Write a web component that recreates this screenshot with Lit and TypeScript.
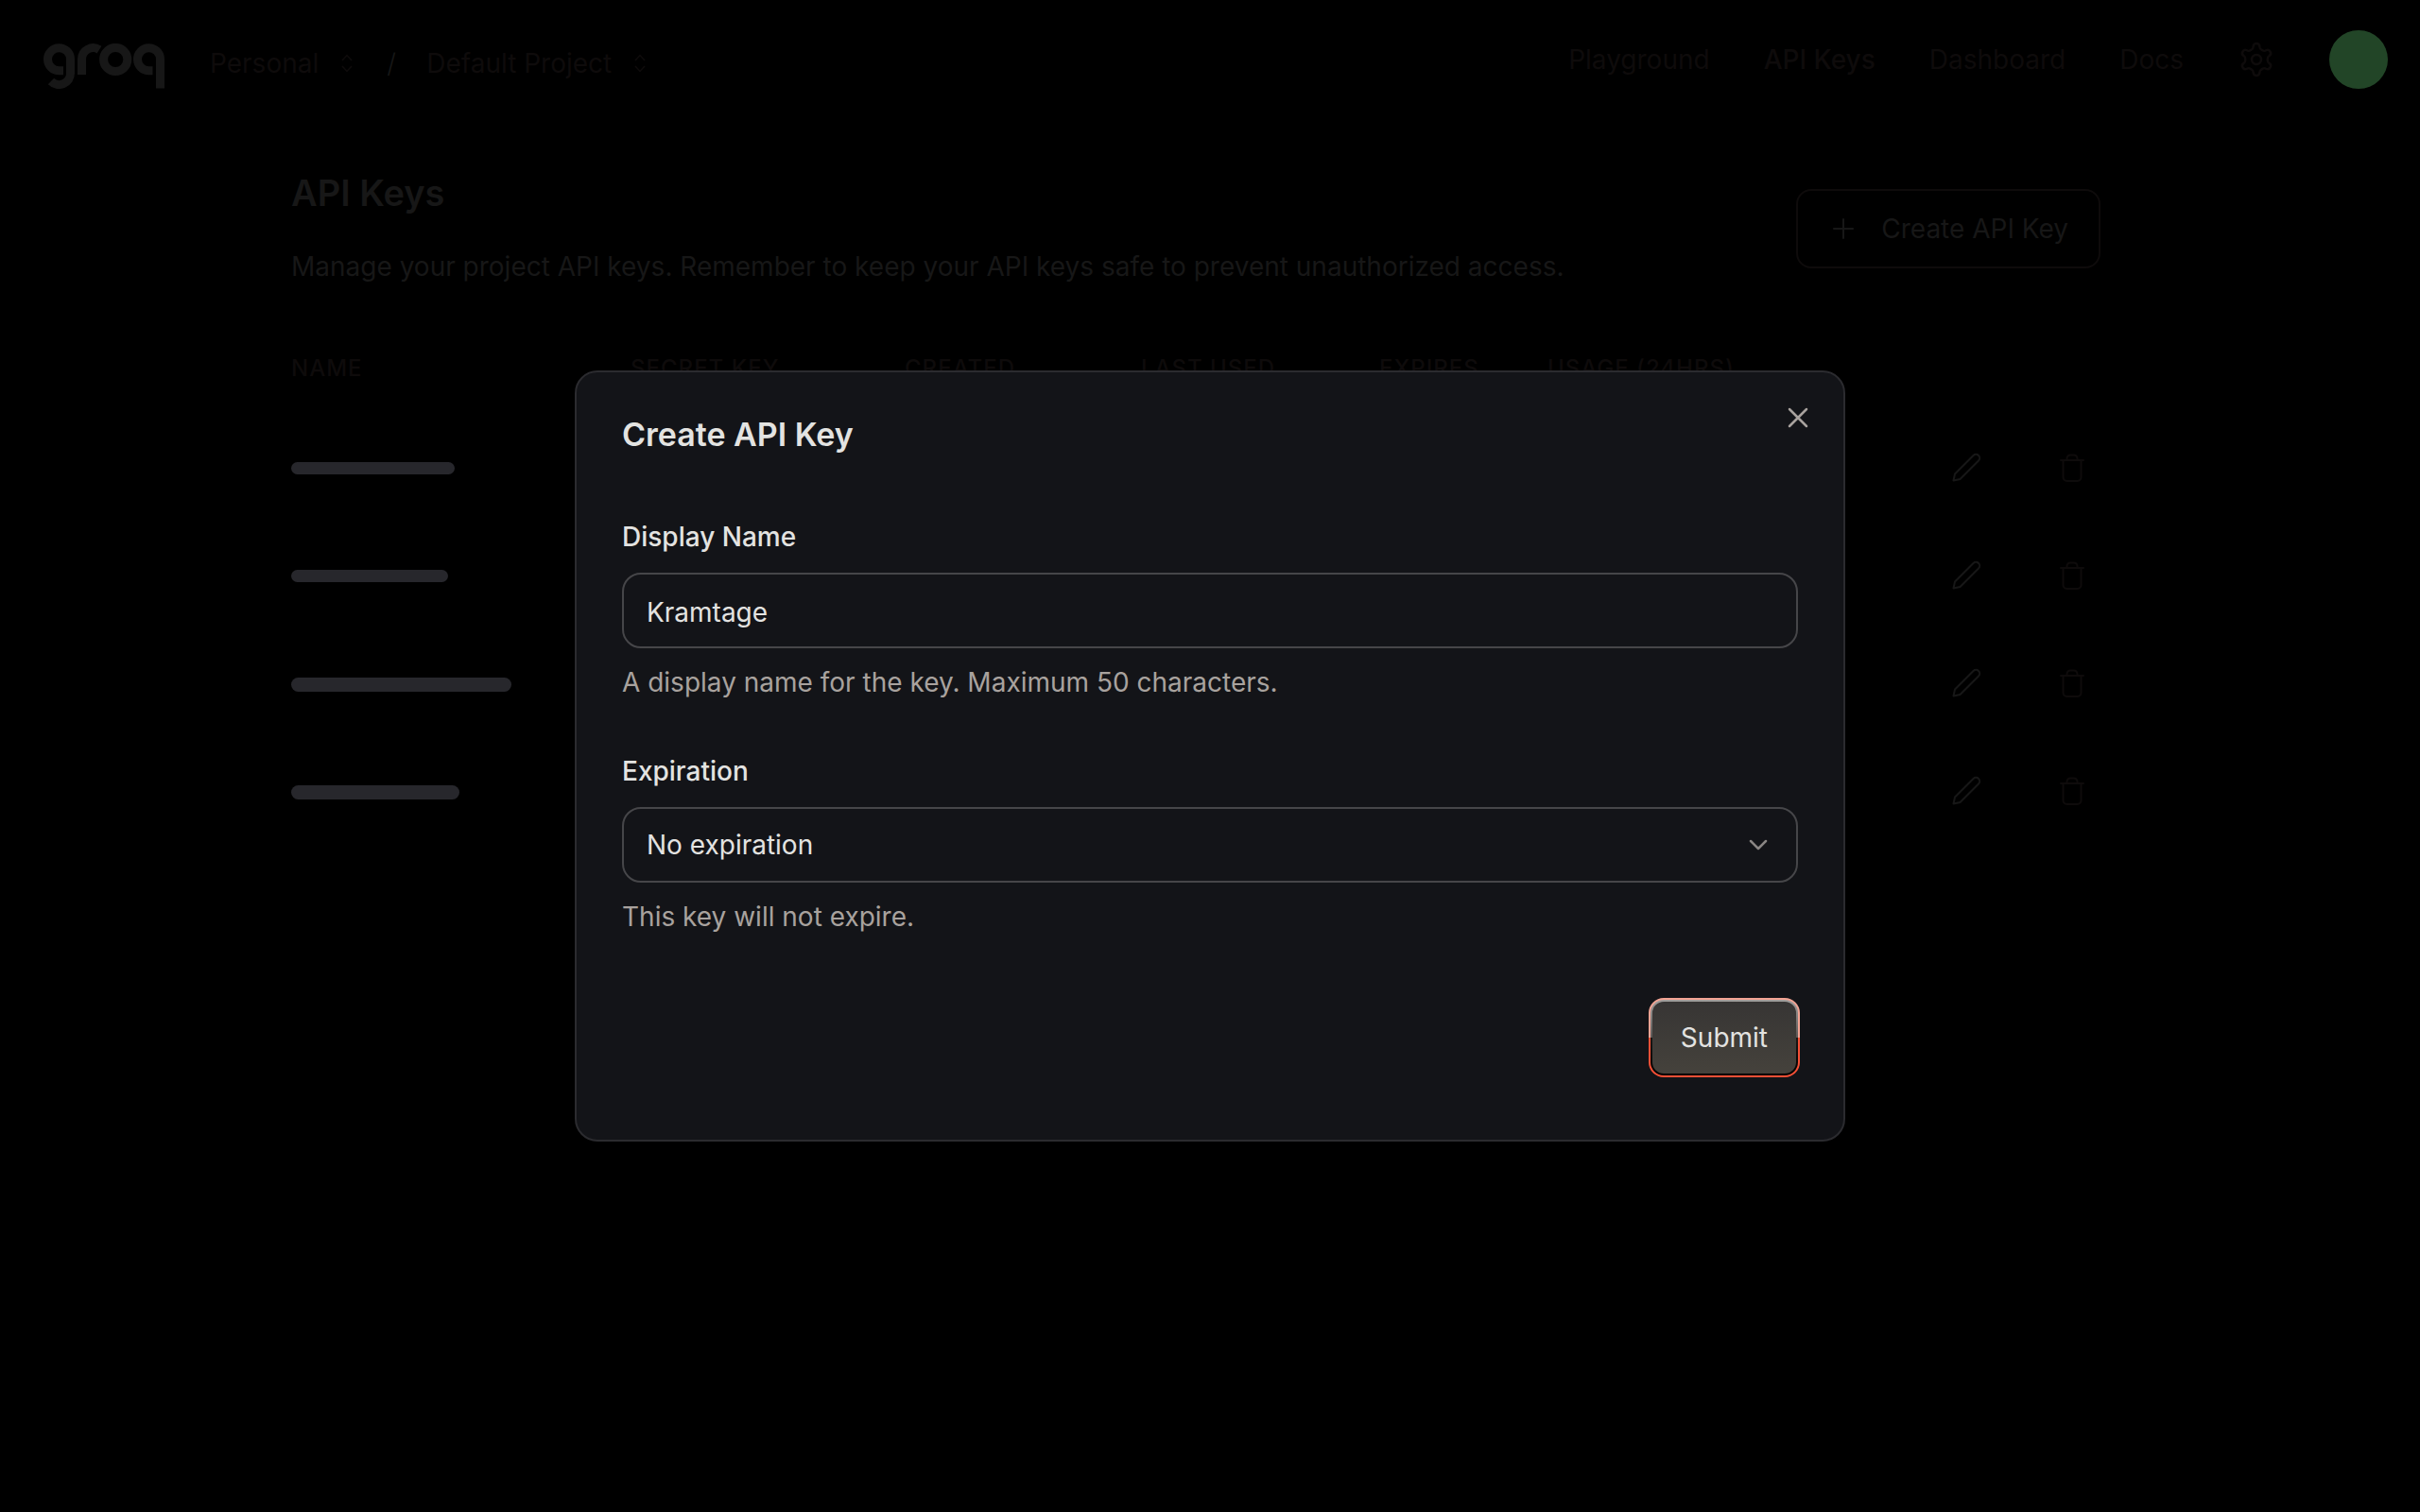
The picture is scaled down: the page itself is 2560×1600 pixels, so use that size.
import { LitElement, html, css } from "lit";
import { customElement, state } from "lit/decorators.js";

interface KeyRow {
  id: number;
  width: number;
  height: number;
}

const rows: KeyRow[] = [
  { id: 1, width: 173, height: 13 },
  { id: 2, width: 166, height: 13 },
  { id: 3, width: 233, height: 15 },
  { id: 4, width: 178, height: 15 },
];

/* Six rounded teeth, each a copy of the top one turned by 60 degrees. */
function gearOutline(): string {
  const turn = (x: number, y: number, k: number) => {
    const a = (k * Math.PI) / 3;
    const px = 20 + x * Math.cos(a) - y * Math.sin(a);
    const py = 20 + x * Math.sin(a) + y * Math.cos(a);
    return `${px.toFixed(2)} ${py.toFixed(2)}`;
  };
  let d = `M${turn(-5.85, -10.13, 0)}`;
  for (let k = 0; k < 6; k++) {
    d += `C${turn(-3.6, -11.4, k)} ${turn(-3.4, -11.6, k)} ${turn(-3.4, -13.6, k)}`;
    d += `A3.4 3.4 0 0 1 ${turn(3.4, -13.6, k)}`;
    d += `C${turn(3.4, -11.6, k)} ${turn(3.6, -11.4, k)} ${turn(5.85, -10.13, k)}`;
  }
  return d + "Z";
}

const gearPath = gearOutline();

const sorter = html`<svg class="sorter" viewBox="0 0 12 20" aria-hidden="true">
  <path d="M1 7 6 1.5 11 7M1 13 6 18.5 11 13" />
</svg>`;

@customElement("app-topbar")
export class AppTopbar extends LitElement {
  static styles = css`
    :host {
      display: block;
      color: #0e0b0b;
      font-size: 28px;
      line-height: 40px;
    }
    .bar {
      display: flex;
      justify-content: space-between;
      align-items: flex-start;
      padding: 32px 34px 0 46px;
    }
    .crumbs {
      display: flex;
      align-items: flex-start;
      padding-top: 14px;
      line-height: 42px;
    }
    .logo {
      display: block;
      margin-right: 48px;
    }
    .logo svg {
      display: block;
      width: 128px;
      height: 48px;
      fill: none;
      stroke: #171717;
      stroke-width: 9;
    }
    button {
      display: flex;
      align-items: center;
      gap: 24px;
      padding: 0;
      border: 0;
      background: none;
      color: inherit;
      font: inherit;
    }
    .sorter {
      width: 12px;
      height: 20px;
      fill: none;
      stroke: currentColor;
      stroke-width: 1.5;
    }
    .slash {
      width: 74px;
      margin-left: 4px;
      text-align: center;
      color: #171717;
      font-weight: 300;
    }
    nav {
      display: flex;
      align-items: center;
      gap: 57px;
      min-height: 62px;
    }
    a {
      color: inherit;
      text-decoration: none;
    }
    .current {
      font-weight: 500;
    }
    .gear {
      display: block;
      width: 40px;
      height: 40px;
      fill: none;
      stroke: currentColor;
      stroke-width: 2.5;
      stroke-linejoin: round;
    }
    .avatar {
      width: 62px;
      height: 62px;
      border-radius: 50%;
      background: #224527;
    }
  `;

  render() {
    return html`<header class="bar">
      <div class="crumbs">
        <a class="logo" href="#" aria-label="groq">
          <svg viewBox="0 0 128 48" aria-hidden="true">
            <path d="M21 28.7H16.5A12 12 0 1 1 28.5 16.5V31.5A12 12 0 0 1 8 40" />
            <path d="M40.5 33V16.5A12 12 0 0 1 59 6.6" />
            <circle cx="76.2" cy="17" r="12.6" />
            <path d="M115.5 28.7H111.5A12 12 0 1 1 123.5 16.5V47.5" />
          </svg>
        </a>
        <button type="button">Personal ${sorter}</button>
        <span class="slash">/</span>
        <button type="button">Default Project ${sorter}</button>
      </div>
      <nav>
        <a href="#">Playground</a>
        <a href="#" class="current" aria-current="page">API Keys</a>
        <a href="#">Dashboard</a>
        <a href="#">Docs</a>
        <button type="button" aria-label="Settings">
          <svg class="gear" viewBox="0 0 40 40" aria-hidden="true">
            <path d=${gearPath} />
            <circle cx="20" cy="20" r="5" />
          </svg>
        </button>
        <button type="button" class="avatar" aria-label="Account"></button>
      </nav>
    </header>`;
  }
}

@customElement("api-keys-page")
export class ApiKeysPage extends LitElement {
  static styles = css`
    :host {
      display: block;
      padding: 86px 338px 0 308px;
      color: #171717;
      font-size: 28px;
      line-height: 40px;
    }
    .intro {
      display: flex;
      justify-content: space-between;
      align-items: center;
      margin-bottom: 38px;
    }
    h1 {
      margin: 0 0 34px;
      font-size: 38px;
      line-height: 48px;
      font-weight: 600;
    }
    p {
      margin: 0;
      padding-bottom: 2px;
    }
    button {
      display: block;
      padding: 0;
      border: 0;
      background: none;
      color: inherit;
      font: inherit;
    }
    svg {
      display: block;
      fill: none;
      stroke: currentColor;
      stroke-linecap: round;
      stroke-linejoin: round;
      stroke-width: 2;
    }
    .create {
      display: flex;
      align-items: center;
      gap: 28px;
      height: 84px;
      padding: 0 32px 0 36px;
      border: 2px solid #0e0b0b;
      border-radius: 16px;
    }
    .create svg {
      width: 24px;
      height: 24px;
    }
    table {
      width: 100%;
      table-layout: fixed;
      border-collapse: collapse;
    }
    th {
      height: 96px;
      padding: 0;
      color: #0e0b0b;
      font-size: 24px;
      font-weight: 500;
      letter-spacing: 1px;
      text-align: left;
      text-transform: uppercase;
    }
    td {
      box-sizing: border-box;
      height: 114px;
      padding: 0;
    }
    .key {
      padding-top: 51px;
      vertical-align: top;
    }
    .name {
      width: 359px;
    }
    .secret {
      width: 290px;
    }
    .created {
      width: 250px;
    }
    .used {
      width: 252px;
    }
    .expires {
      width: 178px;
    }
    .edit {
      width: 112px;
    }
    .remove {
      width: 48px;
    }
    td svg {
      width: 36px;
      height: 36px;
    }
    .trash {
      color: #0e0b0b;
    }
    .mask {
      border-radius: 8px;
      background: #27272c;
    }
  `;

  render() {
    return html`<main>
      <div class="intro">
        <div>
          <h1>API Keys</h1>
          <p>Manage your project API keys. Remember to keep your API keys safe to prevent unauthorized access.</p>
        </div>
        <button type="button" class="create">
          <svg viewBox="0 0 24 24" aria-hidden="true"><path d="M12 2V22M2 12H22" /></svg>
          Create API Key
        </button>
      </div>
      <table>
        <thead>
          <tr>
            <th class="name">Name</th>
            <th class="secret">Secret Key</th>
            <th class="created">Created</th>
            <th class="used">Last Used</th>
            <th class="expires">Expires</th>
            <th>Usage (24hrs)</th>
            <th class="edit"></th>
            <th class="remove"></th>
          </tr>
        </thead>
        <tbody>
          ${rows.map(
            (row) => html`<tr>
              <td class="key"><div class="mask" style="width:${row.width}px;height:${row.height}px"></div></td>
              <td></td>
              <td></td>
              <td></td>
              <td></td>
              <td></td>
              <td>
                <button type="button" aria-label="Edit key ${row.id}">
                  <svg viewBox="0 0 36 36" aria-hidden="true">
                    <path d="M4.5 31.5 6 24.5 25.5 5A3.8 3.8 0 0 1 31 10.5L11.5 30Z" />
                  </svg>
                </button>
              </td>
              <td>
                <button type="button" class="trash" aria-label="Delete key ${row.id}">
                  <svg viewBox="0 0 36 36" aria-hidden="true">
                    <path d="M6 10H30M8.5 10V28A4 4 0 0 0 12.5 32H23.5A4 4 0 0 0 27.5 28V10M12.5 10V8A4 4 0 0 1 16.5 4.5H19.5A4 4 0 0 1 23.5 8V10" />
                  </svg>
                </button>
              </td>
            </tr>`
          )}
        </tbody>
      </table>
    </main>`;
  }
}

@customElement("create-key-dialog")
export class CreateKeyDialog extends LitElement {
  @state() private displayName = "Kramtage";

  static styles = css`
    :host {
      position: fixed;
      inset: 0;
      display: flex;
      align-items: center;
      justify-content: center;
      color: #e3e3e1;
      font-size: 28px;
      line-height: 40px;
    }
    .panel {
      position: relative;
      box-sizing: border-box;
      width: min(1344px, 92vw);
      padding: 42px 48px 66px;
      border: 2px solid #2b2b2f;
      border-radius: 24px;
      background: #131418;
    }
    h2 {
      margin: 0 0 64px;
      font-size: 34px;
      line-height: 48px;
      font-weight: 600;
    }
    .close {
      position: absolute;
      top: 32px;
      right: 32px;
      padding: 0;
      border: 0;
      background: none;
      color: #a8a29e;
    }
    .close svg {
      display: block;
      width: 32px;
      height: 32px;
    }
    svg {
      fill: none;
      stroke: currentColor;
      stroke-width: 2.5;
      stroke-linecap: round;
      stroke-linejoin: round;
    }
    form {
      display: flex;
      flex-direction: column;
    }
    .field {
      display: flex;
      flex-direction: column;
      margin-bottom: 54px;
    }
    .last {
      margin-bottom: 66px;
    }
    label {
      margin-bottom: 18px;
      font-weight: 500;
    }
    input,
    select {
      box-sizing: border-box;
      width: 100%;
      height: 80px;
      margin: 0;
      padding: 0 24px;
      border: 2px solid #464649;
      border-radius: 20px;
      outline: none;
      appearance: none;
      background: transparent;
      color: inherit;
      font: inherit;
    }
    input {
      padding-top: 3px;
    }
    .picker {
      display: grid;
      align-items: center;
    }
    .picker > * {
      grid-area: 1 / 1;
    }
    .picker svg {
      width: 24px;
      height: 24px;
      margin-right: 30px;
      justify-self: end;
      color: #8a8684;
      pointer-events: none;
    }
    .hint {
      margin: 16px 0 0;
      color: #a8a29e;
    }
    .submit {
      align-self: flex-end;
      margin: 0 -2px 0 0;
      padding: 2px;
      border: 2px solid transparent;
      border-radius: 16px;
      background:
        linear-gradient(#a09e9c, #5c5856 50%, #1a1816 50%, #000) padding-box,
        linear-gradient(#f3a494 50%, #f55036 50%) border-box;
      color: inherit;
      font: inherit;
    }
    .face {
      display: block;
      padding: 18px 30px;
      border-radius: 12px;
      background: linear-gradient(#373534, #45423c);
    }
  `;

  render() {
    return html`<section class="panel" role="dialog" aria-modal="true" aria-labelledby="title">
      <h2 id="title">Create API Key</h2>
      <button type="button" class="close" aria-label="Close">
        <svg viewBox="0 0 32 32" aria-hidden="true"><path d="M7 7 25 25M25 7 7 25" /></svg>
      </button>
      <form @submit=${(e: Event) => e.preventDefault()}>
        <div class="field">
          <label for="display-name">Display Name</label>
          <input
            id="display-name"
            type="text"
            maxlength="50"
            .value=${this.displayName}
            @input=${(e: Event) => (this.displayName = (e.target as HTMLInputElement).value)}
          />
          <p class="hint">A display name for the key. Maximum 50 characters.</p>
        </div>
        <div class="field last">
          <label for="expiration">Expiration</label>
          <div class="picker">
            <select id="expiration">
              <option>No expiration</option>
            </select>
            <svg viewBox="0 0 24 24" aria-hidden="true"><path d="M4 8 12 16 20 8" /></svg>
          </div>
          <p class="hint">This key will not expire.</p>
        </div>
        <button type="submit" class="submit"><span class="face">Submit</span></button>
      </form>
    </section>`;
  }
}

@customElement("app-root")
export class AppRoot extends LitElement {
  static styles = css`
    :host {
      display: block;
      min-height: 100vh;
      background: #000;
      font-family: Inter, "Liberation Sans", sans-serif;
    }
  `;

  render() {
    return html`
      <app-topbar></app-topbar>
      <api-keys-page></api-keys-page>
      <create-key-dialog></create-key-dialog>
    `;
  }
}
